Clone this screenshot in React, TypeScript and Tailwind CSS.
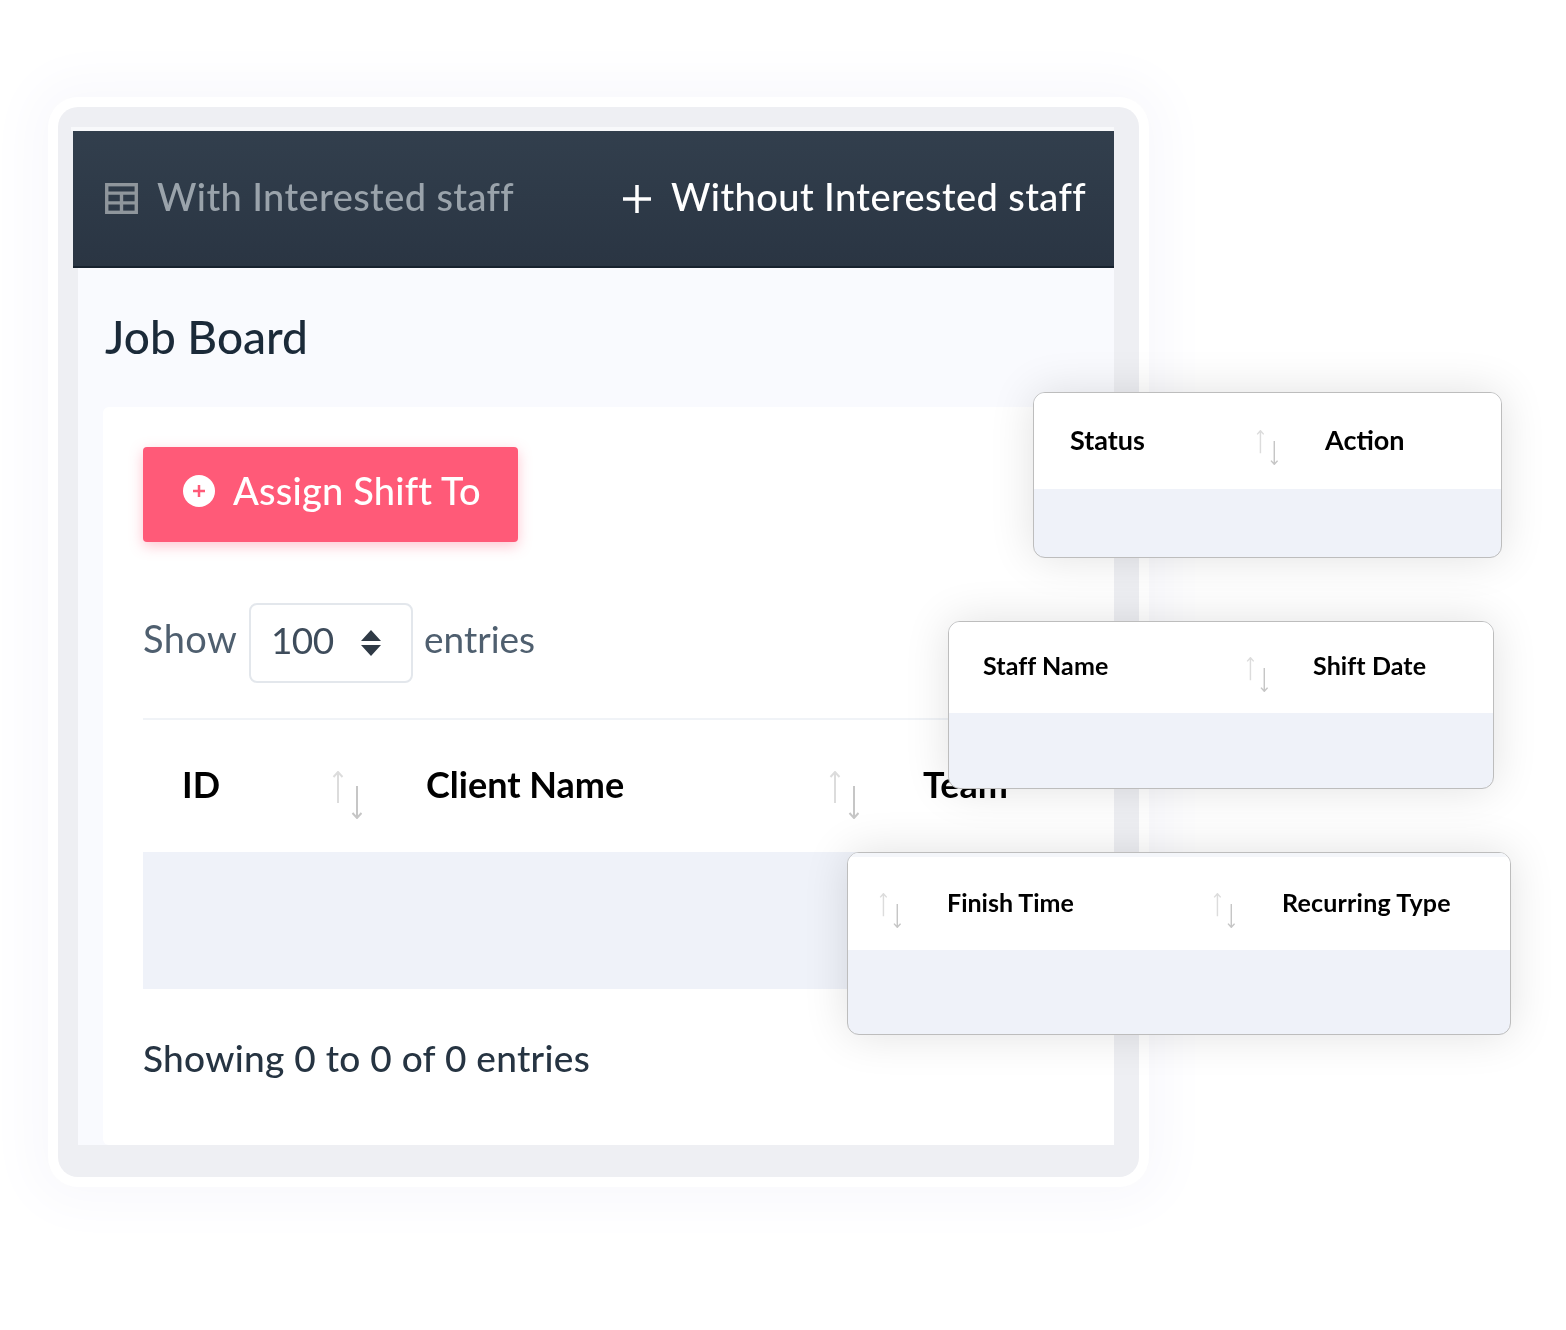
const SortArrows = ({ className }: { className: string }) => (
    <svg viewBox="0 0 30 48" fill="none" className={className}>
        <path d="M6 1V32M1.5 6L6 1L10.5 6" stroke="#dcdcdc" strokeWidth="2" />
        <path d="M25 15V47M20.5 42L25 47L29.5 42" stroke="#c6c6c6" strokeWidth="2" />
    </svg>
);

const FloatHead = ({ className, children }: { className: string; children: React.ReactNode }) => (
    <div className={`absolute bg-[#eff2f9] border border-[#bdbdbd] rounded-xl overflow-hidden shadow-[0_0_45px_rgba(0,0,0,0.12)] ${className}`}>
        {children}
    </div>
);

export default function App() {
    return (
        <div className="relative w-[1566px] h-[1330px] bg-white overflow-hidden font-['Lato',sans-serif]">
            <div className="absolute inset-0 pt-[107px] pl-[58px] blur-[0.5px]">
                {/* main window */}
                <div className="w-[1081px] h-[1070px] pt-[20px] pl-[15px] pr-[25px] bg-[#eeeff3] rounded-[20px] shadow-[0_0_0_10px_#ffffff,0_0_50px_30px_#f9f9fd]">
                    <div className="-ml-[2px] h-[4px] bg-[#f8f9fb]"></div>
                    <div className="h-[137px] flex items-center bg-gradient-to-b from-[#323f4d] to-[#2a3543] border-b-2 border-[#17222e]">
                        <div className="flex items-center pl-[32px] w-[550px] text-[#9aa3ab]">
                            <svg viewBox="0 0 34 32" fill="none" stroke="#8f969c" strokeWidth="3.5" className="w-[33px] h-[31px]">
                                <rect x="1.75" y="1.75" width="30.5" height="28.5" />
                                <path d="M1.5 10.5H32.5M1.5 20.5H32.5M17 10.5V30.5" />
                            </svg>
                            <span className="ml-[19px] mb-[6px] text-[38px] leading-none font-medium tracking-[0.4px]">With Interested staff</span>
                        </div>
                        <div className="flex items-center text-white">
                            <svg viewBox="0 0 28 28" stroke="#ffffff" strokeWidth="3.5" className="w-[28px] h-[28px]">
                                <path d="M14 0V28M0 14H28" />
                            </svg>
                            <span className="ml-[20px] mb-[6px] text-[38px] leading-none font-medium tracking-[0.4px]">Without Interested staff</span>
                        </div>
                    </div>

                    <div className="ml-[5px] h-[877px] pl-[25px] pt-[42px] bg-[#f9fafe]">
                        <h1 className="h-[56px] pl-[2px] text-[46px] leading-[54px] font-medium text-[#1b2a39]">Job Board</h1>
                        <div className="mt-[41px] h-[738px] pl-[40px] pt-[40px] bg-white rounded-l-[6px]">
                            <div className="w-[375px] h-[95px] flex items-center pl-[40px] bg-[#ff5a78] rounded-[4px] shadow-[0_4px_14px_rgba(255,90,120,0.35)]">
                                <div className="w-[32px] h-[32px] mb-[7px] rounded-full bg-white flex items-center justify-center">
                                    <svg viewBox="0 0 14 14" stroke="#ff5a78" strokeWidth="2.5" className="w-[14px] h-[14px]">
                                        <path d="M7 1V13M1 7H13" />
                                    </svg>
                                </div>
                                <span className="ml-[18px] mb-[10px] text-[38px] leading-none font-medium tracking-[0.2px] text-white">Assign Shift To</span>
                            </div>

                            <div className="mt-[61px] h-[79px] flex items-center text-[37px] text-[#4f5f6f]">
                                <span className="w-[106px] mb-[8px] text-[38px] tracking-[0.4px]">Show</span>
                                <div className="w-[164px] h-[80px] flex items-center pl-[20px] border-2 border-[#e3e7ec] rounded-[8px]">
                                    <span className="w-[90px] mb-[6px] tracking-[-0.6px] text-[#3e4c5b]">100</span>
                                    <svg viewBox="0 0 20 26" fill="#2f3a46" className="w-[20px] h-[26px]">
                                        <path d="M10 0L20 11H0ZM10 26L0 15H20Z" />
                                    </svg>
                                </div>
                                <span className="ml-[11px] mb-[8px]">entries</span>
                            </div>

                            <div className="mt-[36px] h-[2px] bg-[#f0f3f7]"></div>
                            <div className="h-[132px] flex items-center text-[36px] leading-none font-bold text-black">
                                <div className="w-[283px] pl-[39px] pr-[64px] flex items-center justify-between">
                                    <span className="mb-[4px]">ID</span>
                                    <SortArrows className="w-[30px] h-[48px] mt-[18px]" />
                                </div>
                                <div className="w-[497px] pr-[64px] flex items-center justify-between">
                                    <span className="mb-[4px]">Client Name</span>
                                    <SortArrows className="w-[30px] h-[48px] mt-[18px]" />
                                </div>
                                <span className="mb-[4px]">Team</span>
                            </div>
                            <div className="h-[137px] bg-[#eff2f9]"></div>
                            <p className="mt-[46px] text-[37px] leading-[46px] font-medium tracking-[0.3px] text-[#263442]">Showing 0 to 0 of 0 entries</p>
                        </div>
                    </div>
                </div>
            </div>

            <FloatHead className="left-[1033px] top-[392px] w-[469px] h-[166px]">
                <div className="h-[96px] bg-white flex items-center text-[27px] leading-none font-bold text-black">
                    <span className="ml-[36px] mb-[4px] w-[186px] blur-[0.3px]">Status</span>
                    <SortArrows className="w-[22px] h-[35px] mt-[13px]" />
                    <span className="ml-[47px] mb-[4px] blur-[0.3px]">Action</span>
                </div>
            </FloatHead>

            <FloatHead className="left-[948px] top-[621px] w-[546px] h-[168px]">
                <div className="h-[91px] bg-white flex items-center text-[25px] leading-none font-bold text-black">
                    <span className="ml-[34px] mb-[4px] w-[263px] tracking-[0.1px] blur-[0.3px]">Staff Name</span>
                    <SortArrows className="w-[22px] h-[35px] mt-[13px]" />
                    <span className="ml-[45px] mb-[4px] tracking-[0.1px] blur-[0.3px]">Shift Date</span>
                </div>
            </FloatHead>

            <FloatHead className="left-[847px] top-[852px] w-[664px] h-[183px]">
                <div className="h-[97px] bg-white border-t-4 border-[#f4f6fa] flex items-center text-[25px] leading-none font-bold text-black">
                    <SortArrows className="ml-[31px] w-[22px] h-[35px] mt-[13px]" />
                    <span className="ml-[46px] mb-[2px] w-[266px] blur-[0.3px]">Finish Time</span>
                    <SortArrows className="w-[22px] h-[35px] mt-[13px]" />
                    <span className="ml-[47px] mb-[2px] tracking-[0.2px] blur-[0.3px]">Recurring Type</span>
                </div>
            </FloatHead>
        </div>
    );
}
